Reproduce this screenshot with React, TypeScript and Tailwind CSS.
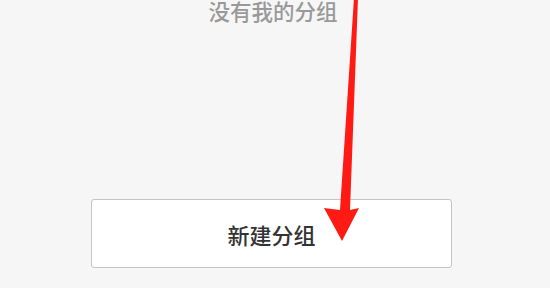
export default function App() {
  return (
    <div
      className="relative h-[288px] w-[550px] overflow-hidden bg-[#f6f6f6]"
      style={{ fontFamily: '"Noto Sans CJK SC", "Liberation Sans", sans-serif' }}
    >
      <div className="flex flex-col items-center">
        <p className="ml-[-4px] h-[22px] text-[21.5px] font-medium leading-[22px] text-[#999999]">没有我的分组</p>
      </div>
      <div className="ml-[91px] mt-[177px] flex h-[69px] w-[361px] items-center justify-center rounded-[3px] border border-[#c4c4c4] bg-white">
        <span className="mt-[2px] text-[22px] font-medium text-[#333333]">新建分组</span>
      </div>
      <svg className="pointer-events-none absolute left-0 top-0" width="550" height="288" viewBox="0 0 550 288">
        <polygon points="354,-2 358,-2 350,210 359,208 342,241 324,208 340,210" fill="#ff1a14" />
      </svg>
    </div>
  )
}
